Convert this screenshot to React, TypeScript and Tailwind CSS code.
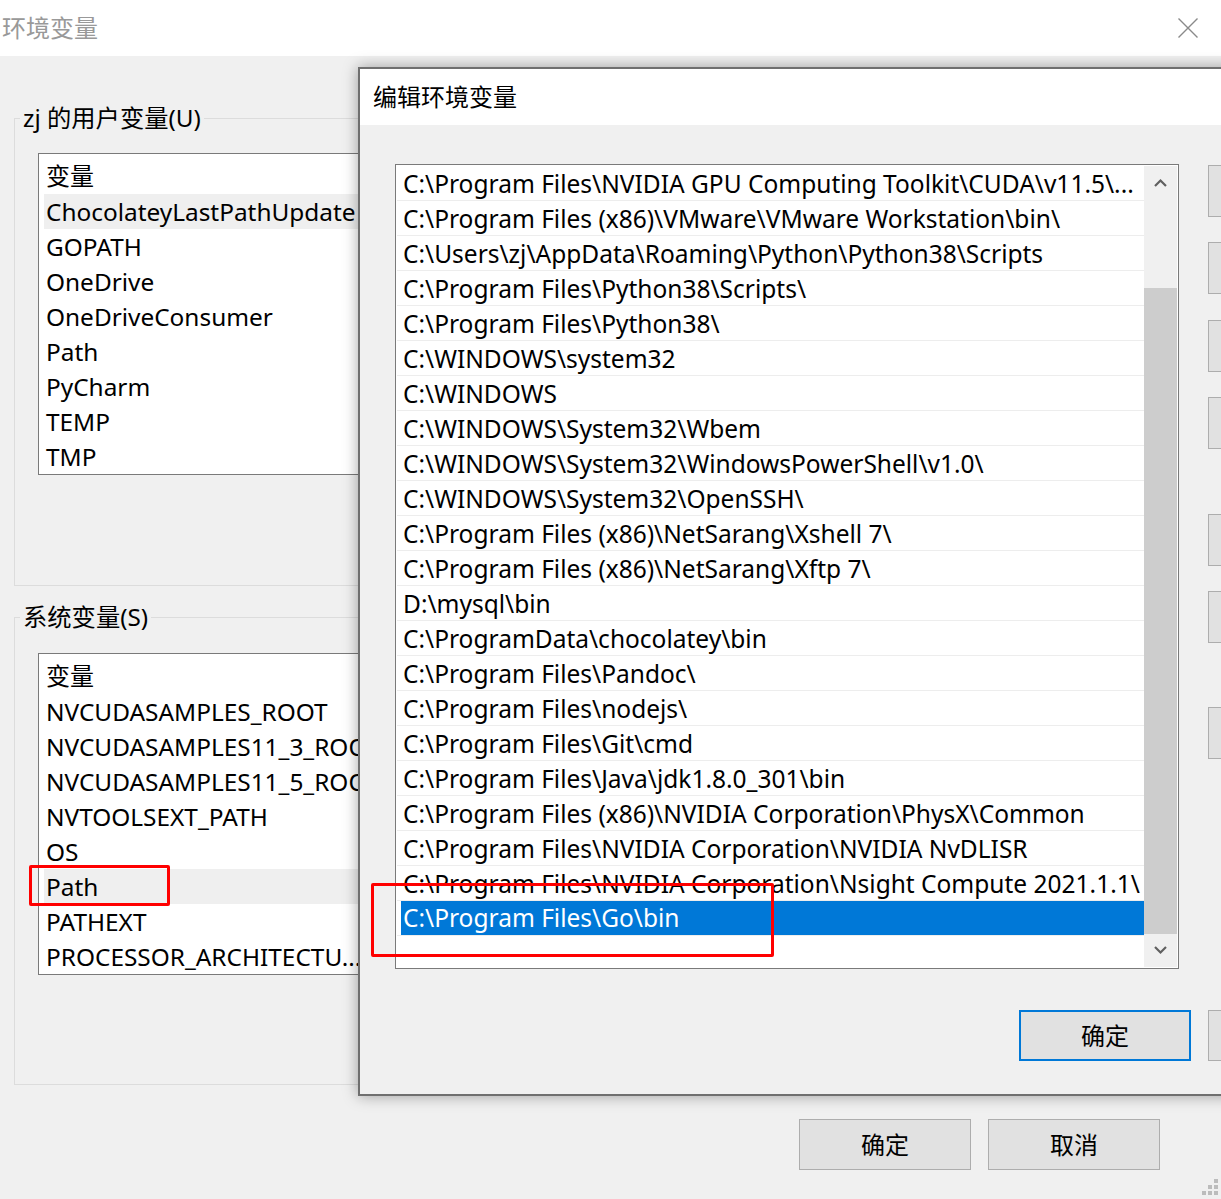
import React from 'react'

const userVars = [
  'ChocolateyLastPathUpdate',
  'GOPATH',
  'OneDrive',
  'OneDriveConsumer',
  'Path',
  'PyCharm',
  'TEMP',
  'TMP',
]

const sysVars = [
  'NVCUDASAMPLES_ROOT',
  'NVCUDASAMPLES11_3_ROOT',
  'NVCUDASAMPLES11_5_ROOT',
  'NVTOOLSEXT_PATH',
  'OS',
  'Path',
  'PATHEXT',
  'PROCESSOR_ARCHITECTU...',
]

const paths = [
  'C:\\Program Files\\NVIDIA GPU Computing Toolkit\\CUDA\\v11.5\\...',
  'C:\\Program Files (x86)\\VMware\\VMware Workstation\\bin\\',
  'C:\\Users\\zj\\AppData\\Roaming\\Python\\Python38\\Scripts',
  'C:\\Program Files\\Python38\\Scripts\\',
  'C:\\Program Files\\Python38\\',
  'C:\\WINDOWS\\system32',
  'C:\\WINDOWS',
  'C:\\WINDOWS\\System32\\Wbem',
  'C:\\WINDOWS\\System32\\WindowsPowerShell\\v1.0\\',
  'C:\\WINDOWS\\System32\\OpenSSH\\',
  'C:\\Program Files (x86)\\NetSarang\\Xshell 7\\',
  'C:\\Program Files (x86)\\NetSarang\\Xftp 7\\',
  'D:\\mysql\\bin',
  'C:\\ProgramData\\chocolatey\\bin',
  'C:\\Program Files\\Pandoc\\',
  'C:\\Program Files\\nodejs\\',
  'C:\\Program Files\\Git\\cmd',
  'C:\\Program Files\\Java\\jdk1.8.0_301\\bin',
  'C:\\Program Files (x86)\\NVIDIA Corporation\\PhysX\\Common',
  'C:\\Program Files\\NVIDIA Corporation\\NVIDIA NvDLISR',
  'C:\\Program Files\\NVIDIA Corporation\\Nsight Compute 2021.1.1\\',
  'C:\\Program Files\\Go\\bin',
]

// dialog side buttons, top margin before each
const sideButtons = [
  { label: '新建(N)', mt: 'mt-0' },
  { label: '编辑(E)', mt: 'mt-[25px]' },
  { label: '浏览(B)...', mt: 'mt-[26px]' },
  { label: '删除(D)', mt: 'mt-[25px]' },
  { label: '上移(U)', mt: 'mt-[65px]' },
  { label: '下移(O)', mt: 'mt-[25px]' },
  { label: '编辑文本(T)...', mt: 'mt-[64px]' },
]

function VarList({ items, selected, mt }: { items: string[]; selected: string; mt: string }) {
  return (
    <div className={'w-[1145px] border border-[#7a7a7a] bg-white pl-[5px] text-[24.4px] ' + mt}>
      <div className="h-[40px] pl-[2px] pt-[2px] text-[24px] leading-[40px]">变量</div>
      {items.map((name, i) => (
        <div
          key={name + i}
          className={
            'h-[35px] whitespace-nowrap pl-[2px] leading-[35px] ' +
            (name === selected ? 'bg-[#efefef]' : '')
          }
        >
          {name}
        </div>
      ))}
    </div>
  )
}

function WinButton({
  children,
  className = '',
  focused = false,
}: {
  children: React.ReactNode
  className?: string
  focused?: boolean
}) {
  return (
    <button
      type="button"
      className={
        'flex w-[172px] shrink-0 items-center justify-center bg-[#e1e1e1] text-[24px] text-black ' +
        (focused ? 'border-2 border-[#0078d7] ' : 'border border-[#adadad] ') +
        className
      }
    >
      {children}
    </button>
  )
}

function Chevron({ up }: { up?: boolean }) {
  return (
    <svg width="13" height="9" viewBox="0 0 13 9" fill="none">
      <path
        d={up ? 'M1 8 L6.5 2.5 L12 8' : 'M1 1 L6.5 6.5 L12 1'}
        stroke="#606060"
        strokeWidth="2.2"
      />
    </svg>
  )
}

function EditDialog() {
  return (
    <div className="absolute left-[358px] top-[67px] flex h-[1029px] w-[1100px] flex-col border-2 border-[#6f6f6f] bg-[#f0f0f0] shadow-[0_0_14px_rgba(0,0,0,0.35)]">
      <div className="flex h-[56px] shrink-0 items-center bg-white pl-[13px] text-[24px]">编辑环境变量</div>
      <div className="pl-[35px] pt-[39px]">
        <div className="flex">
          <div className="flex h-[805px] w-[784px] shrink-0 border border-[#7a7a7a] bg-white p-px text-[24.5px]">
            <div className="min-w-0 flex-1 overflow-hidden">
              {paths.map((p, i) => {
                const sel = i === paths.length - 1
                return (
                  <div key={p} className="h-[35px] border-b border-[#ededed]">
                    {sel ? (
                      <div className="ml-[4px] h-[34px] whitespace-nowrap bg-[#0078d7] pl-[2px] leading-[34px] text-white">
                        {p}
                      </div>
                    ) : (
                      <div className="h-[34px] overflow-hidden whitespace-nowrap pl-[6px] leading-[35px]">{p}</div>
                    )}
                  </div>
                )
              })}
            </div>
            <div className="flex w-[33px] shrink-0 flex-col bg-[#f0f0f0]">
              <div className="flex h-[33px] items-center justify-center">
                <Chevron up />
              </div>
              <div className="h-[89px]" />
              <div className="h-[646px] bg-[#cdcdcd]" />
              <div className="flex flex-1 items-center justify-center">
                <Chevron />
              </div>
            </div>
          </div>
          <div className="ml-[29px] flex shrink-0 flex-col pt-px">
            {sideButtons.map((b) => (
              <WinButton key={b.label} className={'h-[52px] ' + b.mt}>
                {b.label}
              </WinButton>
            ))}
          </div>
        </div>
        <div className="mt-[41px] flex gap-[17px] pl-[624px]">
          <WinButton focused className="h-[51px]">
            确定
          </WinButton>
          <WinButton className="h-[51px]">取消</WinButton>
        </div>
      </div>
    </div>
  )
}

export default function App() {
  return (
    <div className="relative h-[1199px] w-[1221px] overflow-hidden bg-[#f0f0f0] font-['Noto_Sans','Noto_Sans_CJK_SC',sans-serif] text-[24px] text-black">
      {/* title bar */}
      <div className="flex h-[56px] items-center justify-between bg-white pl-[2px] pr-[23px]">
        <span className="text-[#999999]">环境变量</span>
        <svg width="20" height="20" viewBox="0 0 20 20">
          <path d="M0.5 0.5 L19.5 19.5 M19.5 0.5 L0.5 19.5" stroke="#8a8a8a" strokeWidth="1.4" />
        </svg>
      </div>

      <div className="px-[14px]">
        <fieldset className="mt-[46px] border border-[#dcdcdc] pb-[110px] pl-[23px]">
          <legend className="-ml-[18px] px-[3px] text-[24.3px] leading-[32px]">zj 的用户变量(U)</legend>
          <VarList items={userVars} selected="ChocolateyLastPathUpdate" mt="mt-[19px]" />
        </fieldset>

        <fieldset className="mt-[15px] border border-[#dcdcdc] pb-[109px] pl-[23px]">
          <legend className="-ml-[18px] px-[3px] text-[24.3px] leading-[32px]">系统变量(S)</legend>
          <VarList items={sysVars} selected="Path" mt="mt-[20px]" />
        </fieldset>

        <div className="mt-[34px] flex justify-end gap-[17px] pr-[47px]">
          <WinButton className="h-[51px]">确定</WinButton>
          <WinButton className="h-[51px]">取消</WinButton>
        </div>
      </div>

      <EditDialog />

      {/* annotation boxes */}
      <div className="absolute left-[29px] top-[865px] h-[41px] w-[141px] rounded-[2px] border-[3px] border-[#ff0000]" />
      <div className="absolute left-[371px] top-[883px] h-[74px] w-[403px] rounded-[2px] border-[3px] border-[#ff0000]" />

      {/* resize grip */}
      <svg className="absolute bottom-[4px] right-[3px]" width="18" height="18" viewBox="0 0 18 18">
        <g fill="#bcbcbc">
          <rect x="14" y="2" width="4" height="4" />
          <rect x="8" y="8" width="4" height="4" />
          <rect x="14" y="8" width="4" height="4" />
          <rect x="2" y="14" width="4" height="4" />
          <rect x="8" y="14" width="4" height="4" />
          <rect x="14" y="14" width="4" height="4" />
        </g>
      </svg>
    </div>
  )
}
